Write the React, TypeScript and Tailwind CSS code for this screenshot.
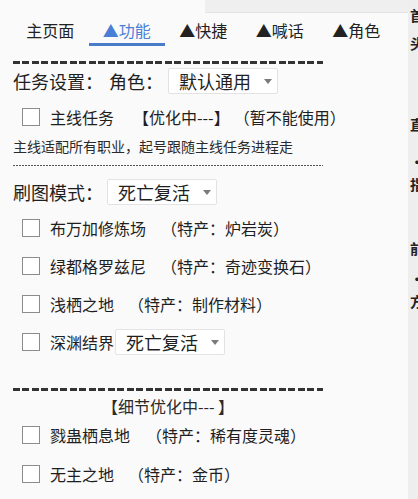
import React from "react"

const TABS = [
  { label: "主页面", active: false },
  { label: "▲功能", active: true },
  { label: "▲快捷", active: false },
  { label: "▲喊话", active: false },
  { label: "▲角色", active: false },
]

const MAPS = [
  { name: "布万加修炼场", extra: "（特产：炉岩炭）", gap: "ml-[15px]" },
  { name: "绿都格罗兹尼", extra: "（特产：奇迹变换石）", gap: "ml-[15px]" },
  { name: "浅栖之地", extra: "（特产：制作材料）", gap: "ml-[14px]" },
]

const EXTRA_MAPS = [
  { name: "戮蛊栖息地", extra: "（特产：稀有度灵魂）", gap: "ml-[16px]", mt: "mt-[6px]" },
  { name: "无主之地", extra: "（特产：金币）", gap: "ml-[14px]", mt: "mt-[13px]" },
]

// cut-off glyphs of the neighbouring panel
const SIDE = [
  { ch: "首", top: "top-[6px]" },
  { ch: "头", top: "top-[34px]" },
  { ch: "直", top: "top-[115px]" },
  { ch: "·", top: "top-[152px]" },
  { ch: "指", top: "top-[175px]" },
  { ch: "前", top: "top-[239px]" },
  { ch: "·", top: "top-[269px]" },
  { ch: "方", top: "top-[292px]" },
]

function Checkbox() {
  return <div className="ml-[22px] w-[18px] h-[18px] shrink-0 border border-[#8c8c8c] bg-white" />
}

function Select({ value, className = "" }: { value: string; className?: string }) {
  return (
    <div
      className={`h-[26px] flex items-center pl-[10px] pr-[5px] bg-white border border-[#e3e3e3] rounded-[2px] ${className}`}
    >
      <span className="text-[18px] leading-[24px] text-[#1f1f1f]">{value}</span>
      <div className="ml-[13px] w-0 h-0 border-l-[4px] border-r-[4px] border-t-[5px] border-l-transparent border-r-transparent border-t-[#7a7a7a]" />
    </div>
  )
}

function ThickDash({ className = "" }: { className?: string }) {
  return (
    <div
      className={`ml-[13px] w-[310px] h-[3px] bg-[repeating-linear-gradient(90deg,#333_0px,#333_7px,transparent_7px,transparent_9.5px)] ${className}`}
    />
  )
}

function MapRow({ name, extra, gap, className = "" }: { name: string; extra: string; gap: string; className?: string }) {
  return (
    <div className={`h-[26px] flex items-center ${className}`}>
      <Checkbox />
      <span className="ml-[10px] text-[16px] leading-[22px]">{name}</span>
      <span className={`${gap} text-[16px] leading-[22px]`}>{extra}</span>
    </div>
  )
}

export default function App() {
  return (
    <div className="relative w-[418px] h-[499px] overflow-hidden flex bg-[#fafafa] text-[#1f1f1f] font-['Noto_Sans_CJK_SC','Noto_Sans',sans-serif]">
      {/* Main panel */}
      <div className="w-[408px] flex flex-col">
        <div className="h-[13px] flex">
          <div className="ml-[205px] flex-1 bg-[#efefef] border-b border-[#e4e4e4]" />
        </div>

        {/* Tabs */}
        <div className="h-[33px] flex px-[12px]">
          {TABS.map((tab) => (
            <div key={tab.label} className="w-[76.5px] h-full flex flex-col items-center">
              <span
                className={`mt-[7px] text-[16px] leading-[20px] ${tab.active ? "text-[#4a7fd6]" : "text-[#222]"}`}
              >
                {tab.label}
              </span>
              {tab.active && <div className="mt-auto w-full h-[3px] bg-[#4a7bc9]" />}
            </div>
          ))}
        </div>

        <ThickDash className="mt-[15px]" />

        {/* 任务设置 */}
        <div className="mt-[4px] h-[26px] flex items-center pl-[13px] text-[18px] leading-[24px]">
          <span>任务设置：</span>
          <span className="ml-[6px]">角色：</span>
          <Select value="默认通用" className="ml-[5px]" />
        </div>

        <div className="mt-[10px] h-[26px] flex items-center">
          <Checkbox />
          <span className="ml-[10px] text-[16px] leading-[22px]">主线任务</span>
          <span className="ml-[19px] text-[16px] leading-[22px]">【优化中---】</span>
          <span className="ml-[4px] text-[16px] leading-[22px]">（暂不能使用）</span>
        </div>

        <div className="mt-[7px] pl-[13px] text-[14px] leading-[18px] text-[#2a2a2a]">
          主线适配所有职业，起号跟随主线任务进程走
        </div>

        <div className="mt-[10px] ml-[13px] w-[310px] h-[1px] bg-[repeating-linear-gradient(90deg,#555_0px,#555_2px,transparent_2px,transparent_3px)]" />

        {/* 刷图模式 */}
        <div className="mt-[13px] h-[26px] flex items-center pl-[13px] text-[18px] leading-[24px]">
          <span>刷图模式：</span>
          <Select value="死亡复活" className="ml-[4px]" />
        </div>

        {MAPS.map((m, i) => (
          <MapRow key={m.name} {...m} className={i === 0 ? "mt-[10px]" : "mt-[12px]"} />
        ))}

        <div className="mt-[12px] h-[26px] flex items-center">
          <Checkbox />
          <span className="ml-[10px] text-[16px] leading-[22px]">深渊结界</span>
          <Select value="死亡复活" className="ml-[1px]" />
        </div>

        <ThickDash className="mt-[33px]" />

        <div className="mt-[5px] ml-[13px] w-[310px] text-center text-[16px] leading-[20px] text-[#2a2a2a]">
          【细节优化中--- 】
        </div>

        {EXTRA_MAPS.map((m) => (
          <MapRow key={m.name} name={m.name} extra={m.extra} gap={m.gap} className={m.mt} />
        ))}
      </div>

      {/* Neighbouring panel edge */}
      <div className="relative flex-1 bg-[#eeeeee] overflow-hidden">
        {SIDE.map((s, i) => (
          <span key={i} className={`absolute left-[2px] ${s.top} text-[14px] leading-[18px] font-bold text-[#222]`}>
            {s.ch}
          </span>
        ))}
      </div>
    </div>
  )
}
